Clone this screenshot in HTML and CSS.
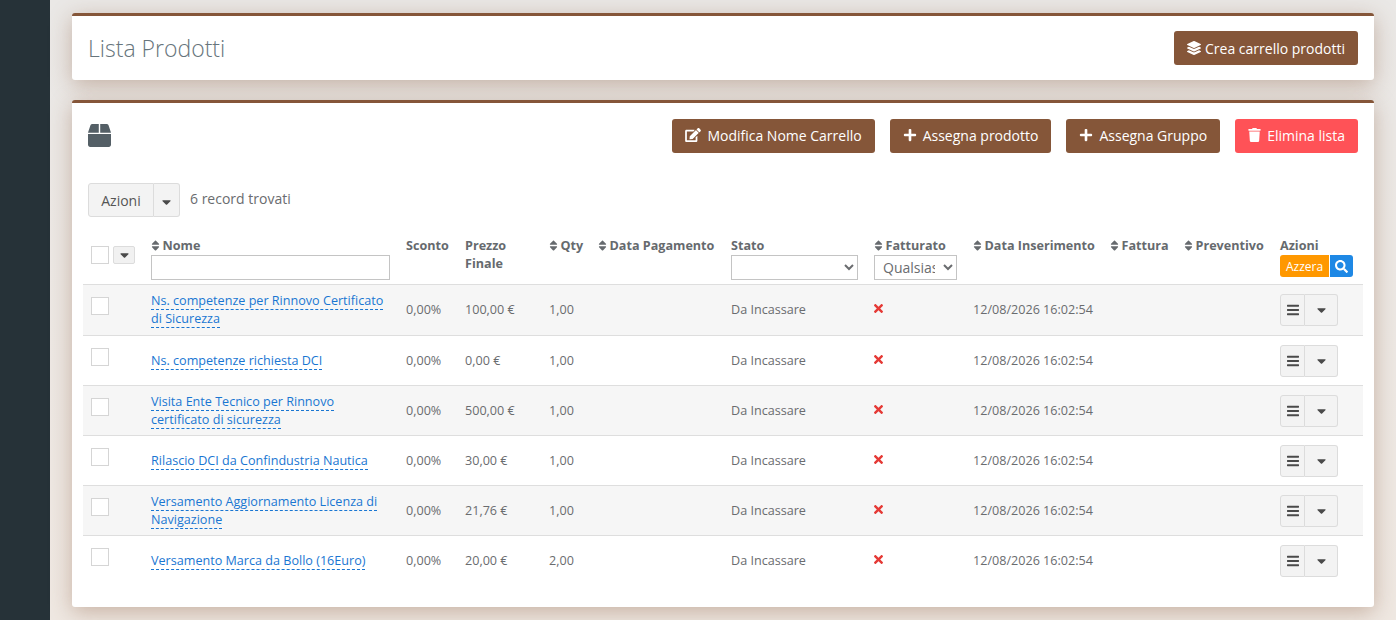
FILE: index.html
```html
<!DOCTYPE html>
<html lang="it">
<head>
    <meta charset="UTF-8">
    <meta name="viewport" content="width=device-width, initial-scale=1.0">
    <title>Lista Prodotti</title>
    <link rel="stylesheet" href="styles.css">
</head>
<body>
    <svg class="icon-defs" aria-hidden="true">
        <symbol id="i-box" viewBox="0 0 512 512"><path d="M509.5 184.6L458.9 32.8C452.4 13.2 434.1 0 413.4 0H272v192h238.7c-.4-2.5-.4-5-1.2-7.4zM240 0H98.6c-20.7 0-39 13.2-45.5 32.8L2.5 184.6c-.8 2.4-.8 4.9-1.2 7.4H240V0zM0 224v240c0 26.5 21.5 48 48 48h416c26.5 0 48-21.5 48-48V224H0z"/></symbol>
        <symbol id="i-layers" viewBox="0 0 512 512"><path d="M12.41 148.02l232.94 105.67c6.8 3.09 14.49 3.09 21.29 0l232.94-105.67c16.55-7.51 16.55-32.52 0-40.03L266.65 2.31a25.607 25.607 0 0 0-21.29 0L12.41 107.98c-16.55 7.51-16.55 32.53 0 40.04zm487.18 88.28l-58.09-26.33-161.64 73.27c-7.56 3.43-15.59 5.17-23.86 5.17s-16.29-1.74-23.86-5.17L70.51 209.97l-58.1 26.33c-16.55 7.5-16.55 32.5 0 40l232.94 105.59c6.8 3.08 14.49 3.08 21.29 0L499.59 276.3c16.55-7.5 16.55-32.5 0-40zm0 127.8l-57.87-26.23-161.86 73.37c-7.56 3.43-15.59 5.17-23.86 5.17s-16.29-1.74-23.86-5.17L70.29 337.87 12.41 364.1c-16.55 7.5-16.55 32.5 0 40l232.94 105.59c6.8 3.08 14.49 3.08 21.29 0L499.59 404.1c16.55-7.5 16.55-32.5 0-40z"/></symbol>
        <symbol id="i-edit" viewBox="0 0 576 512"><path d="M402.6 83.2l90.2 90.2c3.8 3.8 3.8 10 0 13.8L274.4 405.6l-92.8 10.3c-12.4 1.4-22.9-9.1-21.5-21.5l10.3-92.8L388.8 83.2c3.8-3.8 10-3.8 13.8 0zm162-22.9l-48.8-48.8c-15.2-15.2-39.9-15.2-55.2 0l-35.4 35.4c-3.8 3.8-3.8 10 0 13.8l90.2 90.2c3.8 3.8 10 3.8 13.8 0l35.4-35.4c15.2-15.3 15.2-40 0-55.2zM384 346.2V448H64V128h229.8c3.2 0 6.2-1.3 8.5-3.5l40-40c7.6-7.6 2.2-20.5-8.5-20.5H48C21.5 64 0 85.5 0 112v352c0 26.5 21.5 48 48 48h352c26.5 0 48-21.5 48-48V306.2c0-10.7-12.9-16-20.5-8.5l-40 40c-2.2 2.3-3.5 5.3-3.5 8.5z"/></symbol>
        <symbol id="i-plus" viewBox="0 0 448 512"><path d="M416 208H272V64c0-17.67-14.33-32-32-32h-32c-17.67 0-32 14.33-32 32v144H32c-17.67 0-32 14.33-32 32v32c0 17.67 14.33 32 32 32h144v144c0 17.67 14.33 32 32 32h32c17.67 0 32-14.33 32-32V304h144c17.67 0 32-14.33 32-32v-32c0-17.67-14.33-32-32-32z"/></symbol>
        <symbol id="i-trash" viewBox="0 0 448 512"><path d="M432 32H312l-9.4-18.7A24 24 0 0 0 281.1 0H166.8a23.72 23.72 0 0 0-21.4 13.3L136 32H16A16 16 0 0 0 0 48v32a16 16 0 0 0 16 16h416a16 16 0 0 0 16-16V48a16 16 0 0 0-16-16zM53.2 467a48 48 0 0 0 47.9 45h245.8a48 48 0 0 0 47.9-45L416 128H32z"/></symbol>
        <symbol id="i-search" viewBox="0 0 512 512"><path d="M505 442.7L405.3 343c-4.5-4.5-10.6-7-17-7H372c27.6-35.3 44-79.7 44-128C416 93.1 322.9 0 208 0S0 93.1 0 208s93.1 208 208 208c48.3 0 92.7-16.4 128-44v16.3c0 6.4 2.5 12.5 7 17l99.7 99.7c9.4 9.4 24.6 9.4 33.9 0l28.3-28.3c9.4-9.4 9.4-24.6.1-34zM208 336c-70.7 0-128-57.2-128-128 0-70.7 57.2-128 128-128 70.7 0 128 57.2 128 128 0 70.7-57.2 128-128 128z"/></symbol>
        <symbol id="i-times" viewBox="0 0 352 512"><path d="M242.72 256l100.07-100.07c12.28-12.28 12.28-32.19 0-44.48l-22.24-22.24c-12.28-12.28-32.19-12.28-44.48 0L176 189.28 75.93 89.21c-12.28-12.28-32.19-12.28-44.48 0L9.21 111.45c-12.28 12.28-12.28 32.19 0 44.48L109.28 256 9.21 356.07c-12.28 12.28-12.28 32.19 0 44.48l22.24 22.24c12.28 12.28 32.2 12.28 44.48 0L176 322.72l100.07 100.07c12.28 12.28 32.2 12.28 44.48 0l22.24-22.24c12.28-12.28 12.28-32.19 0-44.48L242.72 256z"/></symbol>
        <symbol id="i-bars" viewBox="0 0 448 512"><path d="M16 132h416c8.837 0 16-7.163 16-16V76c0-8.837-7.163-16-16-16H16C7.163 60 0 67.163 0 76v40c0 8.837 7.163 16 16 16zm0 160h416c8.837 0 16-7.163 16-16v-40c0-8.837-7.163-16-16-16H16c-8.837 0-16 7.163-16 16v40c0 8.837 7.163 16 16 16zm0 160h416c8.837 0 16-7.163 16-16v-40c0-8.837-7.163-16-16-16H16c-8.837 0-16 7.163-16 16v40c0 8.837 7.163 16 16 16z"/></symbol>
        <symbol id="i-caret" viewBox="0 0 320 512"><path d="M31.3 192h257.3c17.8 0 26.7 21.5 14.1 34.1L174.1 354.8c-7.8 7.8-20.5 7.8-28.3 0L17.2 226.1C4.6 213.5 13.5 192 31.3 192z"/></symbol>
        <symbol id="i-sort" viewBox="0 0 320 512"><path d="M41 288h238c21.4 0 32.1 25.9 17 41L177 448c-9.4 9.4-24.6 9.4-33.9 0L24 329c-15.1-15.1-4.4-41 17-41zm255-105L177 64c-9.4-9.4-24.6-9.4-33.9 0L24 183c-15.1 15.1-4.4 41 17 41h238c21.4 0 32.1-25.9 17-41z"/></symbol>
    </svg>

    <div class="sidebar"></div>

    <div class="content">
        <div class="card page-head">
            <h1>Lista Prodotti</h1>
            <button class="btn btn-brown btn-crea"><svg class="ico"><use href="#i-layers"/></svg>Crea carrello prodotti</button>
        </div>

        <div class="card list-card">
            <div class="list-top">
                <svg class="box-icon"><use href="#i-box"/></svg>
                <div class="list-buttons">
                    <button class="btn btn-brown"><svg class="ico ico-edit"><use href="#i-edit"/></svg>Modifica Nome Carrello</button>
                    <button class="btn btn-brown"><svg class="ico"><use href="#i-plus"/></svg>Assegna prodotto</button>
                    <button class="btn btn-brown"><svg class="ico"><use href="#i-plus"/></svg>Assegna Gruppo</button>
                    <button class="btn btn-red"><svg class="ico ico-trash"><use href="#i-trash"/></svg>Elimina lista</button>
                </div>
            </div>

            <div class="bulk-row">
                <div class="btn-group">
                    <button class="grey-btn grey-main">Azioni</button>
                    <button class="grey-btn grey-caret"><svg class="caret"><use href="#i-caret"/></svg></button>
                </div>
                <span class="record-count">6 record trovati</span>
            </div>

            <table class="products">
                <colgroup>
                    <col class="c-check"><col class="c-name"><col class="c-sconto"><col class="c-prezzo"><col class="c-qty"><col class="c-pag"><col class="c-stato"><col class="c-fatt"><col class="c-ins"><col class="c-fattura"><col class="c-prev"><col class="c-azioni">
                </colgroup>
                <thead>
                    <tr>
                        <th>
                            <div class="head-check">
                                <span class="checkbox"></span>
                                <button class="mini-caret"><svg class="caret"><use href="#i-caret"/></svg></button>
                            </div>
                        </th>
                        <th><svg class="sort"><use href="#i-sort"/></svg>Nome<input class="filter" type="text"></th>
                        <th>Sconto</th>
                        <th class="th-wrap">Prezzo Finale</th>
                        <th><svg class="sort"><use href="#i-sort"/></svg>Qty</th>
                        <th><svg class="sort"><use href="#i-sort"/></svg>Data Pagamento</th>
                        <th>Stato<select class="filter"><option></option></select></th>
                        <th><svg class="sort"><use href="#i-sort"/></svg>Fatturato<select class="filter filter-fatt"><option>Qualsiasi</option></select></th>
                        <th><svg class="sort"><use href="#i-sort"/></svg>Data Inserimento</th>
                        <th><svg class="sort"><use href="#i-sort"/></svg>Fattura</th>
                        <th><svg class="sort"><use href="#i-sort"/></svg>Preventivo</th>
                        <th>Azioni
                            <div class="head-actions">
                                <button class="azzera">Azzera</button>
                                <button class="cerca"><svg><use href="#i-search"/></svg></button>
                            </div>
                        </th>
                    </tr>
                </thead>
                <tbody>
                    <tr>
                        <td class="cell-check"><span class="checkbox"></span></td>
                        <td class="cell-name"><a class="prod-link" href="#">Ns. competenze per Rinnovo Certificato di Sicurezza</a></td>
                        <td>0,00%</td><td>100,00 €</td><td>1,00</td><td></td><td>Da Incassare</td>
                        <td><svg class="no"><use href="#i-times"/></svg></td>
                        <td>12/08/2026 16:02:54</td><td></td><td></td>
                        <td><div class="row-actions"><button class="ra-menu"><svg><use href="#i-bars"/></svg></button><button class="ra-caret"><svg class="caret"><use href="#i-caret"/></svg></button></div></td>
                    </tr>
                    <tr>
                        <td class="cell-check"><span class="checkbox"></span></td>
                        <td class="cell-name"><a class="prod-link" href="#">Ns. competenze richiesta DCI</a></td>
                        <td>0,00%</td><td>0,00 €</td><td>1,00</td><td></td><td>Da Incassare</td>
                        <td><svg class="no"><use href="#i-times"/></svg></td>
                        <td>12/08/2026 16:02:54</td><td></td><td></td>
                        <td><div class="row-actions"><button class="ra-menu"><svg><use href="#i-bars"/></svg></button><button class="ra-caret"><svg class="caret"><use href="#i-caret"/></svg></button></div></td>
                    </tr>
                    <tr>
                        <td class="cell-check"><span class="checkbox"></span></td>
                        <td class="cell-name"><a class="prod-link" href="#">Visita Ente Tecnico per Rinnovo certificato di sicurezza</a></td>
                        <td>0,00%</td><td>500,00 €</td><td>1,00</td><td></td><td>Da Incassare</td>
                        <td><svg class="no"><use href="#i-times"/></svg></td>
                        <td>12/08/2026 16:02:54</td><td></td><td></td>
                        <td><div class="row-actions"><button class="ra-menu"><svg><use href="#i-bars"/></svg></button><button class="ra-caret"><svg class="caret"><use href="#i-caret"/></svg></button></div></td>
                    </tr>
                    <tr>
                        <td class="cell-check"><span class="checkbox"></span></td>
                        <td class="cell-name"><a class="prod-link" href="#">Rilascio DCI da Confindustria Nautica</a></td>
                        <td>0,00%</td><td>30,00 €</td><td>1,00</td><td></td><td>Da Incassare</td>
                        <td><svg class="no"><use href="#i-times"/></svg></td>
                        <td>12/08/2026 16:02:54</td><td></td><td></td>
                        <td><div class="row-actions"><button class="ra-menu"><svg><use href="#i-bars"/></svg></button><button class="ra-caret"><svg class="caret"><use href="#i-caret"/></svg></button></div></td>
                    </tr>
                    <tr>
                        <td class="cell-check"><span class="checkbox"></span></td>
                        <td class="cell-name"><a class="prod-link" href="#">Versamento Aggiornamento Licenza di Navigazione</a></td>
                        <td>0,00%</td><td>21,76 €</td><td>1,00</td><td></td><td>Da Incassare</td>
                        <td><svg class="no"><use href="#i-times"/></svg></td>
                        <td>12/08/2026 16:02:54</td><td></td><td></td>
                        <td><div class="row-actions"><button class="ra-menu"><svg><use href="#i-bars"/></svg></button><button class="ra-caret"><svg class="caret"><use href="#i-caret"/></svg></button></div></td>
                    </tr>
                    <tr>
                        <td class="cell-check"><span class="checkbox"></span></td>
                        <td class="cell-name"><a class="prod-link" href="#">Versamento Marca da Bollo (16Euro)</a></td>
                        <td>0,00%</td><td>20,00 €</td><td>2,00</td><td></td><td>Da Incassare</td>
                        <td><svg class="no"><use href="#i-times"/></svg></td>
                        <td>12/08/2026 16:02:54</td><td></td><td></td>
                        <td><div class="row-actions"><button class="ra-menu"><svg><use href="#i-bars"/></svg></button><button class="ra-caret"><svg class="caret"><use href="#i-caret"/></svg></button></div></td>
                    </tr>
                </tbody>
            </table>
        </div>
    </div>
</body>
</html>
```

FILE: styles.css
```css
html, body {
    height: 100%;
}
body {
    margin: 0;
    display: flex;
    overflow: hidden;
    font-family: "Open Sans", sans-serif;
    font-size: 12.6px;
    line-height: 18px;
    color: #6a6c6f;
    background: linear-gradient(to bottom, #eae8e6, #efe8e2);
}
.icon-defs {
    display: none;
}
.sidebar {
    width: 50px;
    flex: none;
    background: #263238;
}
.content {
    flex: 1;
    padding: 13px 22px;
    min-width: 0;
}
.card {
    background: #fff;
    border-top: 3px solid #855639;
    border-radius: 3px;
    box-shadow: 0 5px 22px rgba(133, 86, 57, 0.38);
}
.page-head {
    box-sizing: border-box;
    height: 67px;
    padding: 0 16px;
    display: flex;
    align-items: center;
    justify-content: space-between;
}
h1 {
    margin: 0;
    font-size: 23px;
    font-weight: 300;
    color: #67757c;
}
.list-card {
    margin-top: 20px;
    height: 507px;
    box-sizing: border-box;
    padding: 16px 11px 0;
}
.list-top {
    display: flex;
    align-items: flex-start;
    justify-content: space-between;
    padding: 0 5px;
}
.box-icon {
    width: 23px;
    height: 23px;
    margin-top: 5px;
    fill: #545f66;
}
.list-buttons {
    display: flex;
    gap: 15px;
}
.list-buttons .btn {
    padding-bottom: 2px;
}
.btn {
    height: 34px;
    padding: 0 13px;
    border: none;
    border-radius: 3px;
    color: #fff;
    font-family: inherit;
    font-size: 14px;
    display: inline-flex;
    align-items: center;
    white-space: nowrap;
}
.btn-brown {
    background: #855639;
}
.btn-red {
    background: #ff5257;
}
.ico {
    width: 14px;
    height: 14px;
    margin-right: 6px;
    fill: #fff;
}
.ico-edit {
    width: 16px;
    margin-right: 6px;
}
.ico-trash {
    width: 13px;
}
.btn-crea .ico {
    margin-right: 4px;
}
.bulk-row {
    margin: 30px 0 0 5px;
    display: flex;
    align-items: center;
    gap: 10px;
}
.btn-group {
    display: flex;
}
.grey-btn {
    height: 34px;
    background: #f3f3f3;
    border: 1px solid #dcdcdc;
    color: #555;
    font-family: inherit;
    font-size: 14px;
    padding: 0;
}
.grey-main {
    width: 66px;
    border-radius: 3px 0 0 3px;
}
.grey-caret {
    width: 26px;
    border-left: none;
    border-radius: 0 3px 3px 0;
}
.caret {
    width: 9px;
    height: 14px;
    fill: #4a4a4a;
    vertical-align: middle;
}
.record-count {
    font-size: 14px;
    position: relative;
    top: -1px;
}
.products {
    width: 1280px;
    margin-top: 20px;
    border-collapse: collapse;
    table-layout: fixed;
}
.c-check { width: 60px; }
.c-name { width: 255px; }
.c-sconto { width: 59px; }
.c-prezzo { width: 84px; }
.c-qty { width: 49px; }
.c-pag { width: 133px; }
.c-stato { width: 143px; }
.c-fatt { width: 99px; }
.c-ins { width: 137px; }
.c-fattura { width: 74px; }
.c-prev { width: 96px; }
.c-azioni { width: 91px; }
th {
    padding: 0 8px 4px;
    height: 43px;
    vertical-align: top;
    text-align: left;
    font-weight: 700;
    color: #666a6e;
    white-space: nowrap;
    border-bottom: 1px solid #dedede;
}
.th-wrap {
    white-space: normal;
}
td {
    padding: 7px 8px 6px;
    height: 36px;
    border-top: 1px solid #dedede;
    color: #6a6c6f;
    white-space: nowrap;
}
tbody tr:first-child td {
    padding-bottom: 7px;
}
.cell-name {
    white-space: normal;
}
tbody tr:nth-child(odd) td {
    background: #f6f6f6;
}
.sort {
    width: 9px;
    height: 13px;
    margin-right: 2.5px;
    fill: #666a6e;
    vertical-align: -2px;
}
.filter {
    display: block;
    width: 100%;
    height: 25px;
    box-sizing: border-box;
    margin-top: 0;
    background: #fff;
    border: 1px solid #c4c4c4;
    border-radius: 0;
    font-family: inherit;
    font-size: 14px;
    color: #6a6c6f;
}
.filter-fatt {
    width: 83px;
    padding: 0 5px 0 4px;
}
.head-check {
    display: flex;
    align-items: center;
    gap: 4px;
    margin-top: 9px;
}
.checkbox {
    display: block;
    width: 16px;
    height: 16px;
    background: #fff;
    border: 1px solid #d5d5d5;
}
.cell-check {
    height: auto;
    vertical-align: top;
    padding-top: 12px;
}
.mini-caret {
    width: 22px;
    height: 18px;
    padding: 0;
    background: #f1f1f1;
    border: 1px solid #dcdcdc;
    border-radius: 2px;
    display: flex;
    align-items: center;
    justify-content: center;
}
.prod-link {
    color: #1976d2;
    text-decoration: none;
    border-bottom: 1px dashed #1976d2;
}
.no {
    display: block;
    width: 9px;
    height: 13px;
    margin: -2px 0 1px;
    fill: #e53935;
}
.head-actions {
    display: flex;
}
.azzera {
    width: 49px;
    height: 22px;
    padding: 0;
    background: #ff9800;
    border: none;
    border-radius: 3px 0 0 3px;
    color: #fff;
    font-family: inherit;
    font-size: 12px;
}
.cerca {
    width: 24px;
    height: 22px;
    padding: 0;
    background: #1e88e5;
    border: none;
    border-left: 1px solid #fff;
    border-radius: 0 3px 3px 0;
    display: flex;
    align-items: center;
    justify-content: center;
}
.cerca svg {
    width: 13px;
    height: 13px;
    fill: #fff;
}
.row-actions {
    display: flex;
    height: 32px;
}
.row-actions button {
    height: 32px;
    padding: 0;
    background: #f3f3f3;
    border: 1px solid #dcdcdc;
    display: flex;
    align-items: center;
    justify-content: center;
}
.ra-menu {
    width: 25px;
    border-radius: 3px 0 0 3px;
}
.ra-menu svg {
    width: 12px;
    height: 14px;
    fill: #4a4a4a;
}
.ra-caret {
    width: 33px;
    border-left: none !important;
    border-radius: 0 3px 3px 0;
}
```
